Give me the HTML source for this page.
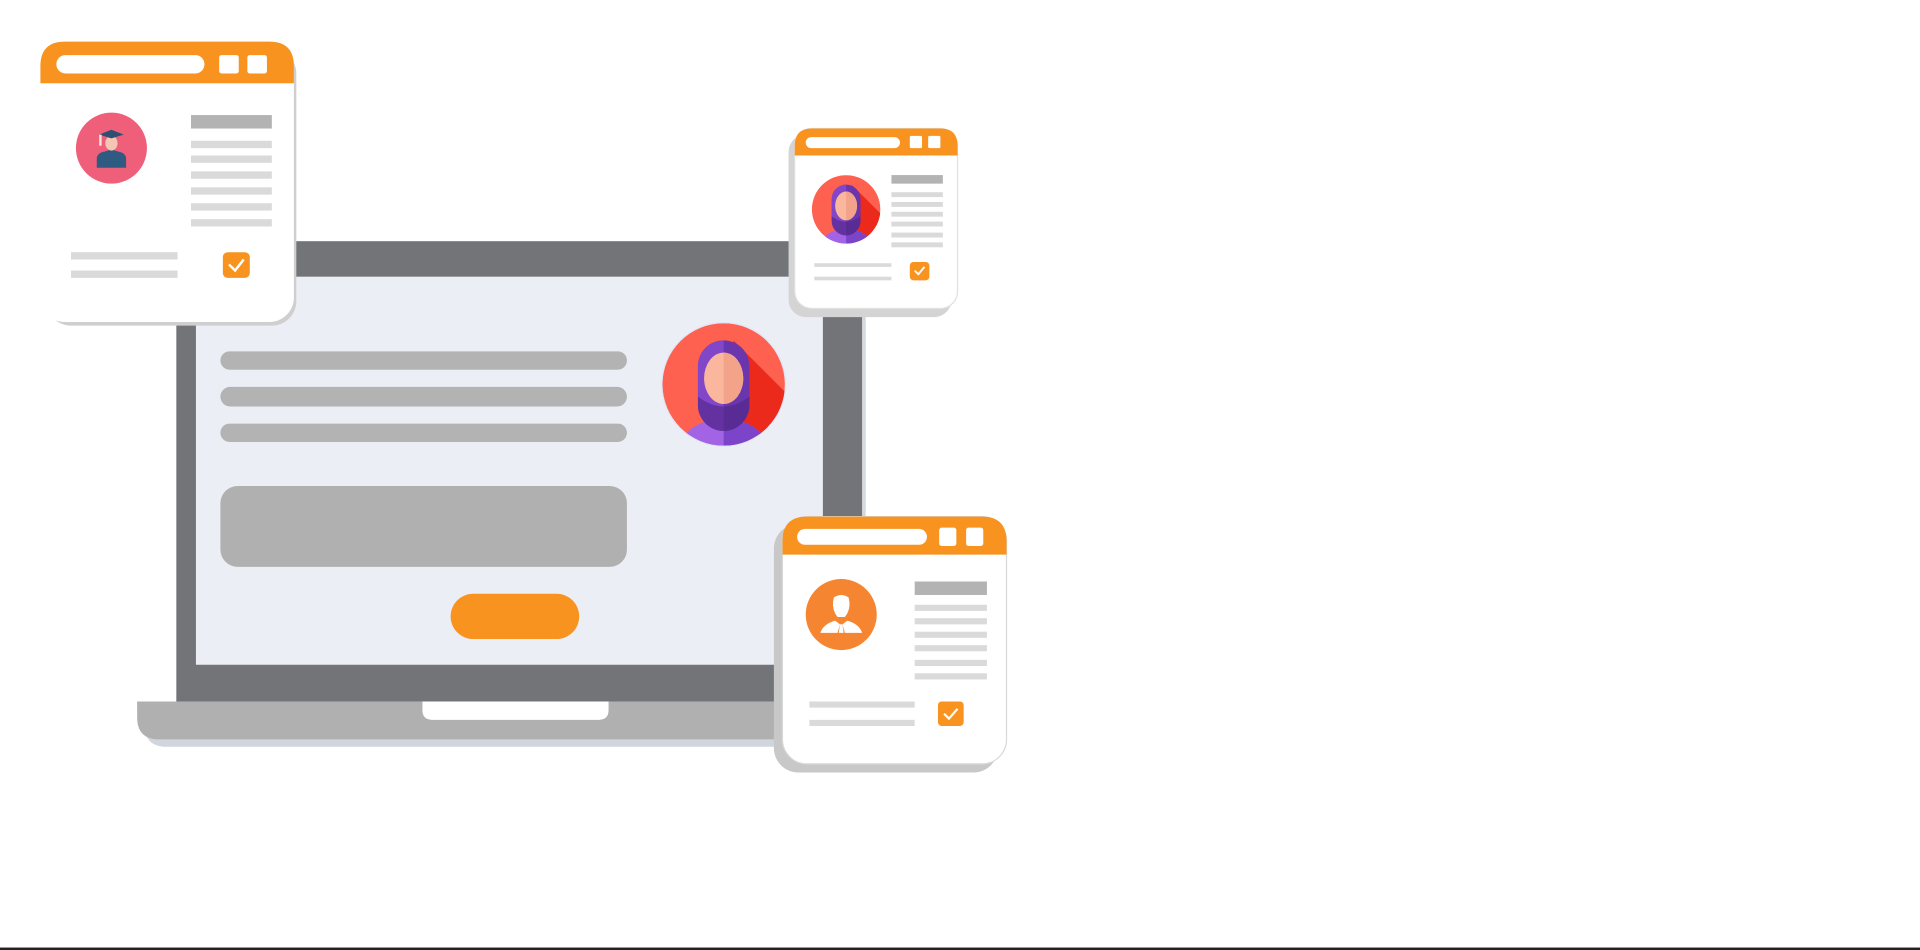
<!DOCTYPE html>
<html><head><meta charset="utf-8"><style>html,body{margin:0;padding:0;background:#fff;overflow:hidden}svg{display:block}</style></head><body>
<svg width="1920" height="950" viewBox="0 0 1568 776" preserveAspectRatio="none" xmlns="http://www.w3.org/2000/svg">
<defs>
<clipPath id="cc"><circle cx="0" cy="0" r="50"/></clipPath>
<g id="hij">
<g clip-path="url(#cc)">
<circle cx="0" cy="0" r="50" fill="#ff6150"/>
<path d="M8 -36 L60 16 L60 60 L20 60 Z" fill="#ec2a1c"/>
<path d="M-36 50 Q-30 30 0 28 Q30 30 36 50 Z" fill="#a263e4"/>
<path d="M0 28 Q30 30 36 50 L0 50 Z" fill="#7c44c8"/>
<rect x="-21" y="-36" width="42" height="74" rx="21" fill="#6a35ad"/>
<path d="M0 -36 A21 21 0 0 0 -21 -15 L-21 17 A21 21 0 0 0 0 38 Z" fill="#8247c9"/>
<path d="M-21 10 Q0 26 21 10 L21 17 A21 21 0 0 1 -21 17 Z" fill="#4e2585" opacity=".6"/>
<ellipse cx="0" cy="-5" rx="16" ry="21" fill="#fbb79e"/>
<path d="M0 -26 A16 21 0 0 1 0 16 Z" fill="#f3a38a"/>
</g></g>
</defs>
<rect width="1568" height="776" fill="#fff"/>
<!-- laptop -->
<rect x="150" y="202" width="557" height="375" fill="#d4d9df"/>
<rect x="144" y="197" width="560" height="376" fill="#737477"/>
<rect x="160" y="226" width="512" height="317" fill="#eceef5"/>
<path d="M118 578 H666 V610 H136 Q118 610 118 592 Z" fill="#d0d6dc"/>
<path d="M112 573 H660 V604 H130 Q112 604 112 586 Z" fill="#b0b0b0"/>
<path d="M345 573 H497 V580 Q497 588 489 588 H353 Q345 588 345 580 Z" fill="#fff"/>
<rect x="180" y="287" width="332" height="15" rx="7.5" fill="#b3b3b3"/>
<rect x="180" y="316" width="332" height="16" rx="8" fill="#b3b3b3"/>
<rect x="180" y="346" width="332" height="15" rx="7.5" fill="#b3b3b3"/>
<rect x="180" y="397" width="332" height="66" rx="14" fill="#b0b0b0"/>
<rect x="368" y="485" width="105" height="37" rx="18.5" fill="#f7931e"/>
<circle cx="591" cy="314" r="51" fill="#dfe6f5"/>
<use href="#hij" transform="translate(591,314)"/>
<!-- card 1 -->
<rect x="38" y="40" width="204" height="226" rx="20" fill="#cfcfcf"/>
<rect x="33" y="34" width="207" height="229" rx="20" fill="#fff"/>
<path d="M33 68 V54 Q33 34 53 34 H220 Q240 34 240 54 V68 Z" fill="#f7931e"/>
<rect x="46" y="45" width="121" height="15" rx="7.5" fill="#fff"/>
<rect x="179" y="45" width="16" height="15" rx="2" fill="#fff"/>
<rect x="202" y="45" width="16" height="15" rx="2" fill="#fff"/>
<circle cx="91" cy="121" r="29" fill="#ef5f7a"/>
<path d="M79 137 V130 Q79 125 85 124 L91 122 L97 124 Q103 125 103 130 V137 Z" fill="#2f5b82"/>
<ellipse cx="91" cy="117" rx="5" ry="6" fill="#f6c6b4"/>
<path d="M81 110 L91 106 L101 110 L91 113 Z" fill="#2c4f72"/>
<rect x="81" y="110" width="2" height="9" fill="#f1e6dc"/>
<rect x="156" y="94" width="66" height="11" fill="#b3b3b3"/>
<g fill="#dadada"><rect x="156" y="115" width="66" height="6"/><rect x="156" y="127" width="66" height="6"/><rect x="156" y="140" width="66" height="6"/><rect x="156" y="153" width="66" height="6"/><rect x="156" y="166" width="66" height="6"/><rect x="156" y="179" width="66" height="6"/><rect x="58" y="206" width="87" height="6"/><rect x="58" y="221" width="87" height="6"/></g>
<rect x="182" y="206" width="22" height="21" rx="4" fill="#f7931e"/>
<path d="M187 216 L192 221 L199 212" stroke="#fff" stroke-width="2" fill="none"/>
<!-- card 2 -->
<rect x="644" y="110" width="133" height="149" rx="14" fill="#d4d4d4"/>
<rect x="649" y="105" width="133" height="147" rx="14" fill="#fff" stroke="#e0e0e0"/>
<path d="M649 127 V119 Q649 105 663 105 H768 Q782 105 782 119 V127 Z" fill="#f7931e"/>
<rect x="658" y="112" width="77" height="9" rx="4.5" fill="#fff"/>
<rect x="743" y="111" width="10" height="10" rx="1" fill="#fff"/>
<rect x="758" y="111" width="10" height="10" rx="1" fill="#fff"/>
<use href="#hij" transform="translate(691,171) scale(0.56)"/>
<rect x="728" y="143" width="42" height="7" fill="#b3b3b3"/>
<g fill="#dadada"><rect x="728" y="157" width="42" height="4"/><rect x="728" y="165" width="42" height="4"/><rect x="728" y="173" width="42" height="4"/><rect x="728" y="181" width="42" height="4"/><rect x="728" y="190" width="42" height="4"/><rect x="728" y="198" width="42" height="4"/><rect x="665" y="215" width="63" height="3"/><rect x="665" y="226" width="63" height="3"/></g>
<rect x="743" y="214" width="16" height="15" rx="3" fill="#f7931e"/>
<path d="M747 221 L750 224 L755 218" stroke="#fff" stroke-width="1.5" fill="none"/>
<!-- card 3 -->
<rect x="632" y="428" width="183" height="203" rx="20" fill="#c8c8c8"/>
<rect x="639" y="422" width="183" height="202" rx="20" fill="#fff" stroke="#d8d8d8"/>
<path d="M639 453 V442 Q639 422 659 422 H802 Q822 422 822 442 V453 Z" fill="#f7931e"/>
<rect x="651" y="432" width="106" height="13" rx="6.5" fill="#fff"/>
<rect x="767" y="431" width="14" height="15" rx="2" fill="#fff"/>
<rect x="789" y="431" width="14" height="15" rx="2" fill="#fff"/>
<circle cx="687" cy="502" r="29" fill="#f58530"/>
<path d="M681 488 Q687 484 693 488 Q695 495 692 501 L690 504 H684 L682 501 Q679 495 681 488 Z" fill="#fff"/>
<path d="M670 517 Q672 510 682 507 L686 510 L684 517 Z M704 517 Q702 510 692 507 L688 510 L690 517 Z" fill="#fff"/>
<path d="M686 510 H688 L689 517 H685 Z" fill="#fff"/>
<rect x="747" y="475" width="59" height="11" fill="#b3b3b3"/>
<g fill="#dadada"><rect x="747" y="494" width="59" height="5"/><rect x="747" y="505" width="59" height="5"/><rect x="747" y="516" width="59" height="5"/><rect x="747" y="527" width="59" height="5"/><rect x="747" y="539" width="59" height="5"/><rect x="747" y="550" width="59" height="5"/><rect x="661" y="573" width="86" height="5"/><rect x="661" y="588" width="86" height="5"/></g>
<rect x="766" y="573" width="21" height="20" rx="3" fill="#f7931e"/>
<path d="M771 583 L775 587 L782 579" stroke="#fff" stroke-width="1.8" fill="none"/>
<rect x="0" y="774" width="1568" height="2" fill="#222"/>
</svg>
</body></html>
